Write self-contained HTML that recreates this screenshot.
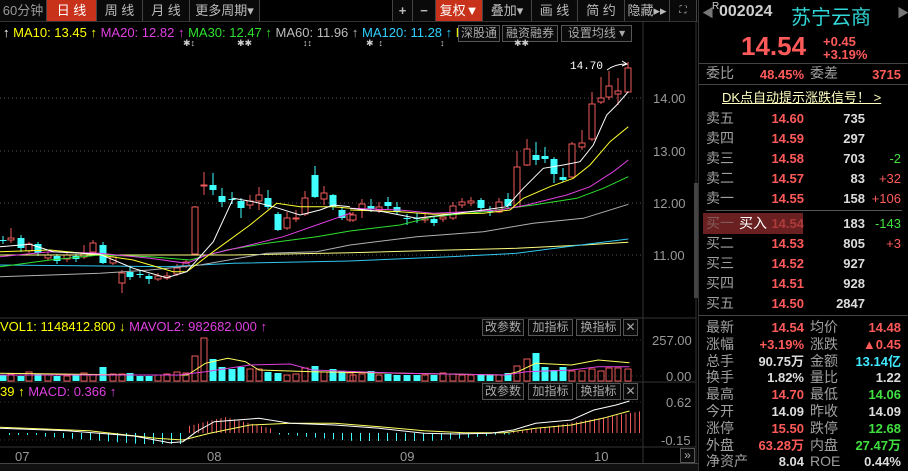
<!DOCTYPE html>
<html><head><meta charset="utf-8">
<style>
*{margin:0;padding:0;box-sizing:border-box}
body{width:908px;height:471px;background:#000;overflow:hidden;position:relative;font-family:"Liberation Sans","Noto Sans CJK SC",sans-serif;color:#ccc}
.tb{position:absolute;top:0;height:21px;border-right:1px solid #444;color:#bbb;font-size:13px;line-height:21px;text-align:center;background:#0a0a0a}
.red{background:#c8321a;color:#fff}
.abs{position:absolute;white-space:nowrap}
.btn{position:absolute;border:1px solid #555;color:#aaa;font-size:12px;line-height:15px;height:17px;text-align:center;background:#0a0a0a}
.rp{position:absolute;left:698px;top:0;width:210px;height:471px;border-left:1px solid #333}
.lab{position:absolute;color:#a0a0a0;font-size:14px;line-height:17px}
.num{position:absolute;font-size:13px;font-weight:bold;text-align:right;line-height:15px}
.r{color:#ff5a5a}.g{color:#40e040}.w{color:#ddd}.c{color:#40e8ff}
</style></head><body>
<div class="tb" style="left:0;width:47px;color:#999">60分钟</div>
<div class="tb red" style="left:47px;width:50px">日 线</div>
<div class="tb" style="left:97px;width:46px">周 线</div>
<div class="tb" style="left:143px;width:47px">月 线</div>
<div class="tb" style="left:190px;width:70px">更多周期▾</div>
<div class="tb" style="left:392px;width:21px;border-left:1px solid #444;font-weight:bold">+</div>
<div class="tb" style="left:413px;width:23px;font-weight:bold">−</div>
<div class="tb red" style="left:436px;width:47px">复权▼</div>
<div class="tb" style="left:483px;width:49px">叠加▾</div>
<div class="tb" style="left:532px;width:46px">画 线</div>
<div class="tb" style="left:578px;width:47px">简 约</div>
<div class="tb" style="left:625px;width:45px">隐藏▸▸</div>
<div class="tb" style="left:670px;width:27px;font-size:10px">⛶</div>
<div class="abs" style="left:0;top:21px;width:698px;height:1px;background:#333"></div>

<div class="abs" style="left:3px;top:25px;font-size:13px;line-height:15px">
<span style="color:#fff">↑</span> <span style="color:#ff0">MA10: 13.45</span> <span style="color:#ff0">↑</span>
<span style="color:#e040e0">MA20: 12.82</span> <span style="color:#e040e0">↑</span>
<span style="color:#30e030">MA30: 12.47</span> <span style="color:#30e030">↑</span>
<span style="color:#bbb">MA60: 11.96</span> <span style="color:#bbb">↑</span>
<span style="color:#30d0ff">MA120: 11.28</span> <span style="color:#30d0ff">↑</span> <span style="color:#ff0">M</span></div>
<div class="btn" style="left:458px;top:25px;width:42px">深股通</div>
<div class="btn" style="left:502px;top:25px;width:56px">融资融券</div>
<div class="btn" style="left:561px;top:25px;width:71px">设置均线 ▾</div>
<div class="abs" style="left:183px;top:38px;font-size:9px;color:#ccc">✱↕</div>
<div class="abs" style="left:237px;top:38px;font-size:9px;color:#ccc">✱✱</div>
<div class="abs" style="left:303px;top:38px;font-size:9px;color:#ccc">↕↕</div>
<div class="abs" style="left:366px;top:38px;font-size:9px;color:#ccc">✱ &nbsp;↕</div>
<div class="abs" style="left:440px;top:38px;font-size:9px;color:#ccc">↕</div>
<div class="abs" style="left:514px;top:38px;font-size:9px;color:#ccc">✱✱</div>

<svg id="ch" class="abs" style="left:0;top:0" width="698" height="471"></svg>

<div class="abs" style="left:653px;top:91px;font-size:13px;color:#999">14.00</div>
<div class="abs" style="left:653px;top:144px;font-size:13px;color:#999">13.00</div>
<div class="abs" style="left:653px;top:196px;font-size:13px;color:#999">12.00</div>
<div class="abs" style="left:653px;top:248px;font-size:13px;color:#999">11.00</div>
<div class="abs" style="left:570px;top:61px;font-size:11px;color:#fff;font-family:'Liberation Mono',monospace">14.70</div>
<div class="abs" style="left:652px;top:333px;font-size:13px;color:#999">257.00</div>
<div class="abs" style="left:666px;top:369px;font-size:13px;color:#999">0.00</div>
<div class="abs" style="left:666px;top:395px;font-size:13px;color:#999">0.62</div>
<div class="abs" style="left:661px;top:433px;font-size:13px;color:#999">-0.15</div>
<div class="abs" style="left:0;top:319px;font-size:13px"><span style="color:#ff0">VOL1: 1148412.800 ↓</span> <span style="color:#e040e0">MAVOL2: 982682.000 ↑</span></div>
<div class="abs" style="left:0;top:384px;font-size:13px"><span style="color:#ff0">39 ↑</span> <span style="color:#e040e0">MACD: 0.366 ↑</span></div>
<div class="btn" style="left:482px;top:319px;width:42px">改参数</div>
<div class="btn" style="left:528px;top:319px;width:45px">加指标</div>
<div class="btn" style="left:576px;top:319px;width:45px">换指标</div>
<div class="btn" style="left:623px;top:319px;width:15px">✕</div>
<div class="btn" style="left:482px;top:383px;width:42px">改参数</div>
<div class="btn" style="left:528px;top:383px;width:45px">加指标</div>
<div class="btn" style="left:576px;top:383px;width:45px">换指标</div>
<div class="btn" style="left:623px;top:383px;width:15px">✕</div>
<div class="abs" style="left:15px;top:449px;font-size:13px;color:#999">07</div>
<div class="abs" style="left:207px;top:449px;font-size:13px;color:#999">08</div>
<div class="abs" style="left:400px;top:449px;font-size:13px;color:#999">09</div>
<div class="abs" style="left:594px;top:449px;font-size:13px;color:#999">10</div>
<div class="btn" style="left:680px;top:448px;width:15px;height:15px;line-height:13px">»</div>

<div class="rp">
<div class="abs" style="left:3px;top:4px;font-size:12px;color:#777">◀</div>
<div class="abs" style="left:13px;top:1px;font-size:10px;color:#ccc">R</div>
<div class="abs" style="left:20px;top:3px;font-size:16px;font-weight:bold;color:#ccc">002024</div>
<div class="abs" style="left:92px;top:1px;font-size:20px;color:#30d8d8">苏宁云商</div>
<div class="abs" style="left:198px;top:4px;font-size:12px;color:#777">▶</div>
<div class="abs r" style="left:42px;top:31px;font-size:26px;font-weight:bold">14.54</div>
<div class="abs r" style="left:124px;top:34px;font-size:13px;font-weight:bold">+0.45</div>
<div class="abs r" style="left:124px;top:47px;font-size:13px;font-weight:bold">+3.19%</div>
<div class="abs" style="left:0;top:63px;width:210px;height:1px;background:#444"></div>
<div class="lab" style="left:7px;top:65px">委比</div>
<div class="num r" style="left:50px;top:67px;width:55px">48.45%</div>
<div class="lab" style="left:111px;top:65px">委差</div>
<div class="num r" style="left:150px;top:67px;width:52px">3715</div>
<div class="abs" style="left:0;top:84px;width:210px;height:1px;background:#444"></div>
<div class="abs" style="left:23px;top:87px;font-size:13px;color:#ffffc0;text-decoration:underline">DK点自动提示涨跌信号！ &gt;</div>
<div class="abs" style="left:7px;top:210px;width:196px;height:1px;background:#555"></div>
<div class="abs" style="left:4px;top:213px;width:100px;height:21px;background:#6a2020"></div>
<div id="book"></div>
<div class="abs" style="left:0;top:315px;width:210px;height:1px;background:#444"></div>
</div>
<div class="abs" style="left:694px;top:183px;width:4px;height:115px;background:#444"></div>
<div class="abs" style="left:0;top:463px;width:698px;height:8px;background:#111;border-top:1px solid #444"></div>

<script>
const svg=document.getElementById('ch');
let h='';
const R='#f05a5a',C='#40ffff';
h+=`<line x1="643" y1="22" x2="643" y2="463" stroke="#333"/><line x1="696" y1="22" x2="696" y2="463" stroke="#333"/>`;
[318,382,447].forEach(y=>h+=`<line x1="0" y1="${y}" x2="696" y2="${y}" stroke="#333"/>`);
[98,151,203,255].forEach(y=>h+=`<line x1="0" y1="${y}" x2="643" y2="${y}" stroke="#555" stroke-dasharray="1,3"/>`);
[340,376,402,440].forEach(y=>h+=`<line x1="0" y1="${y}" x2="643" y2="${y}" stroke="#333" stroke-dasharray="1,3"/>`);
const cd=[[3,'c',240,241,236,244],[11,'r',238,240,228,243],[21,'c',238,248,235,252],[29,'r',244,251,242,253],[38,'c',244,253,242,256],[48,'r',255,258,252,260],[57,'c',256,261,254,264],[67,'r',255,259,252,262],[76,'c',256,259,254,262],[84,'r',253,257,245,259],[93,'r',243,252,240,254],[103,'c',245,263,242,264],[113,'r',257,263,255,265],[122,'r',273,283,270,293],[130,'c',272,277,266,280],[140,'c',274,275,270,278],[149,'c',276,279,274,284],[158,'r',276,279,273,281],[167,'r',276,278,272,280],[177,'r',268,274,264,276],[186,'r',262,266,260,268],[195,'r',207,254,206,255],[204,'r',185,186,172,195],[213,'c',185,190,173,195],[222,'c',196,202,188,207],[232,'c',199,200,192,204],[241,'c',201,208,198,218],[250,'r',201,205,195,209],[259,'r',195,201,187,210],[268,'c',198,207,190,209],[278,'c',214,230,212,231],[287,'r',218,228,212,230],[296,'r',218,219,210,222],[305,'r',198,214,191,216],[315,'c',175,197,166,198],[324,'r',193,199,186,205],[333,'c',195,207,194,210],[342,'c',210,218,208,220],[350,'r',214,220,212,222],[353,'r',215,220,212,222],[362,'r',204,210,199,218],[371,'c',206,209,199,212],[379,'r',207,210,202,213],[388,'c',202,206,197,209],[397,'c',207,212,202,214],[407,'c',218,219,214,225],[417,'c',218,219,213,223],[425,'r',218,220,214,223],[434,'c',219,223,216,226],[443,'r',217,219,214,222],[453,'r',206,218,202,220],[462,'r',202,205,198,208],[471,'r',201,203,197,206],[481,'c',200,208,198,210],[490,'c',211,212,206,216],[499,'r',202,212,198,213],[508,'c',199,206,193,208],[517,'r',167,207,151,208],[527,'r',149,165,139,166],[536,'c',155,160,142,165],[545,'c',156,159,147,163],[554,'c',159,174,157,183],[563,'c',177,180,168,182],[572,'r',144,177,142,178],[582,'r',143,147,130,150],[592,'r',104,139,92,141],[601,'r',98,102,77,104],[609,'r',86,97,71,100],[618,'r',91,94,78,105],[628,'r',68,92,62,93]];
const vh=[6,7,5,9,7,6,5,5,6,8,6,14,7,7,8,5,5,6,7,9,8,25,43,22,14,12,14,12,12,9,8,6,7,13,15,9,12,10,8,6,7,10,6,7,6,6,6,6,6,8,7,6,6,6,6,6,8,15,22,28,14,11,14,10,10,12,10,13,13,12];
cd.forEach((c,i)=>{const col=c[1]=='r'?R:C,x=c[0];
 h+=`<line x1="${x}" y1="${c[4]}" x2="${x}" y2="${c[5]}" stroke="${col}"/>`;
 const bh=Math.max(1,c[3]-c[2]);
 if(c[1]=='r')h+=`<rect x="${x-3}" y="${c[2]}" width="6" height="${bh}" fill="#000" stroke="${col}"/>`;
 else h+=`<rect x="${x-3.5}" y="${c[2]}" width="7" height="${bh}" fill="${col}"/>`;
 const v=vh[i]||6;
 if(c[1]=='r')h+=`<rect x="${x-3}" y="${381-v}" width="6" height="${v}" fill="none" stroke="${col}"/>`;
 else h+=`<rect x="${x-3.5}" y="${381-v}" width="7" height="${v}" fill="${col}"/>`;
});
function pl(a,col,ox,sx,sy,oy){let p=[];for(let i=0;i<a.length;i+=2)p.push((ox+a[i]/sx).toFixed(1)+','+(oy+a[i+1]/sy).toFixed(1));return `<polyline points="${p.join(' ')}" fill="none" stroke="${col}" stroke-width="1"/>`}
function ma(a1,a2,col){return pl(a1,col,0,3,3,55)+pl(a2,col,350,3,3,55)}
h+=ma([0,600,700,600,1050,593],[0,593,300,585,500,580,700,570,835,562],'#ffff80');
h+=ma([0,630,500,635,700,625,1050,618],[0,618,300,605,500,595,650,575,835,552],'#30c8f0');
h+=ma([0,665,300,655,450,645,600,630,800,595,950,590,1050,570],[0,570,200,545,400,530,550,505,700,490,835,448],'#b0b0b0');
h+=ma([0,635,150,615,300,600,450,605,570,615,680,585,800,565,950,545,1050,528],[0,528,150,510,250,485,400,470,550,450,680,430,760,400,835,365],'#30e030');
h+=ma([0,605,150,590,300,595,450,610,560,625,620,600,750,570,850,545,950,510,1050,475],[0,460,150,465,250,475,350,470,450,465,530,450,650,420,720,395,790,350,835,315],'#e040e0');
h+=ma([0,590,150,585,300,600,400,615,520,650,560,650,640,590,750,510,830,445,900,455,1000,455,1050,460],[0,465,150,470,250,478,400,475,480,465,520,430,600,395,670,370,720,330,780,260,835,215],'#ffff30');
h+=ma([0,575,90,568,160,590,300,598,400,640,500,668,560,650,640,560,700,430,760,440,820,455,900,480,960,465,1000,450,1050,455],[0,460,100,470,200,490,280,480,400,465,470,455,520,400,580,340,640,330,690,320,730,270,770,180,800,150,835,110],'#ffffff');
h+=`<path d="M607 70 Q615 64 626 64" stroke="#fff" fill="none"/><path d="M622 61 L627 64 L622 66" stroke="#fff" fill="none"/>`;
h+=pl([0,190,300,195,420,195,460,160,510,145,550,155,580,180,700,185,900,190,1130,195,1160,185,1200,160,1280,165,1340,150,1410,158],'#ffff60',0,2.24,3,310);
h+=pl([0,195,400,195,460,185,560,165,650,162,700,180,900,190,1130,195,1180,185,1280,180,1340,170,1410,170],'#e040e0',0,2.24,3,310);
for(let x=5;x<640;x+=4.5){let v=0,col;
 if(x<185){v=-(Math.min(1,(x)/140))*11;if(x<40)v=-2;}
 else if(x<275){v=Math.max(1,16-Math.abs(x-225)/4);}
 else if(x<510){v=-Math.min(8,Math.sin((x-275)/235*Math.PI)*9);}
 else v=(x-510)/120*20;
 col=v>0?R:C; if(Math.abs(v)<1.5)v=v>0?1.5:-1.5;
 if(x%9<4.6||x>500||(x>185&&x<275)) h+=`<line x1="${x.toFixed(1)}" y1="433" x2="${x.toFixed(1)}" y2="${(433-v).toFixed(1)}" stroke="${col}"/>`;}
h+=pl([0,352,200,362,350,385,410,390,470,370,560,345,650,340,750,340,850,350,950,362,1040,368,1130,368,1200,355,1280,345,1350,325,1410,303],'#ffff60',0,2.24,3,310);
h+=pl([0,355,150,362,300,378,380,398,410,395,440,365,480,335,580,325,650,340,750,345,850,355,950,370,1020,372,1100,370,1150,360,1200,340,1280,330,1330,300,1380,285,1410,273],'#ffffff',0,2.24,3,310);
svg.innerHTML=h;
const b=[['卖五','14.60','735',''],['卖四','14.59','297',''],['卖三','14.58','703','-2'],['卖二','14.57','83','+32'],['卖一','14.55','158','+106'],['买一','14.54','183','-143'],['买二','14.53','805','+3'],['买三','14.52','927',''],['买四','14.51','928',''],['买五','14.50','2847','']];
let o='';
b.forEach((r,i)=>{const y=(i<5?110+i*20:215+(i-5)*20);
 const dim=i==5?'opacity:.45;':'';
 o+=`<div class="lab" style="left:7px;top:${y}px;${dim}">${r[0]}</div><div class="num r" style="left:50px;top:${y+1}px;width:55px;${dim}">${r[1]}</div><div class="num w" style="left:110px;top:${y+1}px;width:56px">${r[2]}</div><div class="num ${r[3][0]=='+'?'r':'g'}" style="left:160px;top:${y+1}px;width:42px;font-weight:normal">${r[3]}</div>`;
 if(i==5)o+=`<div class="abs" style="left:40px;top:${y}px;font-size:14px;line-height:17px;color:#fff">买入</div>`;});
const st=[['最新','14.54','r','均价','14.48','r'],['涨幅','+3.19%','r','涨跌','▲0.45','r'],['总手','90.75万','w','金额','13.14亿','c'],['换手','1.82%','w','量比','1.22','w'],['最高','14.70','r','最低','14.06','g'],['今开','14.09','w','昨收','14.09','w'],['涨停','15.50','r','跌停','12.68','g'],['外盘','63.28万','r','内盘','27.47万','g'],['净资产','8.04','w','ROE','0.44%','w']];
st.forEach((r,i)=>{const y=(319+i*16.8).toFixed(1);
 o+=`<div class="lab" style="left:7px;top:${y}px">${r[0]}</div><div class="num ${r[2]}" style="left:40px;top:${+y+1}px;width:65px">${r[1]}</div><div class="lab" style="left:111px;top:${y}px">${r[3]}</div><div class="num ${r[5]}" style="left:140px;top:${+y+1}px;width:62px">${r[4]}</div>`;});
document.getElementById('book').innerHTML=o;
</script>
</body></html>
